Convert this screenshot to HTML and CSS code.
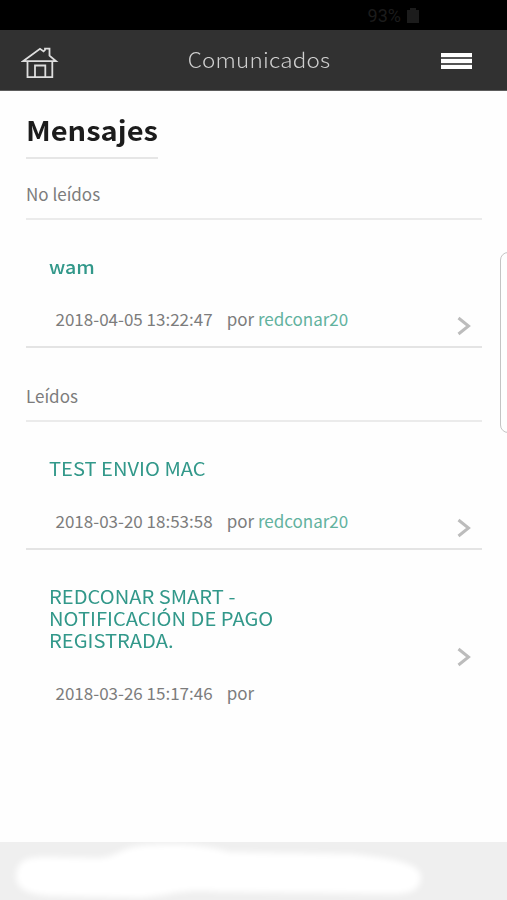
FILE: index.html
```html
<!DOCTYPE html>
<html lang="es">
<head>
<meta charset="utf-8">
<title>Comunicados</title>
<link rel="stylesheet" href="styles.css">
</head>
<body>
<div class="status"><span>93%</span>
  <svg width="12" height="15" viewBox="0 0 12 15"><path d="M3 0h6v2h3v13H0V2h3z" fill="#1c1c1c"/></svg>
</div>
<header class="bar">
  <svg class="home" width="38" height="34" viewBox="0 0 38 34" fill="none" stroke="#dedede" stroke-width="1.8"><path d="M2 15.2L19 2.8l3.6 2.6L24 4V2.6h4.5v7.1L35 15.2zM6.5 15.2v16h24.8v-16M14 31V19.5h10.3V31"/></svg>
  <div class="bar-title">Comunicados</div>
  <div class="menu"><i></i><i></i><i></i></div>
</header>
<main>
  <h1><span>Mensajes</span></h1>
  <h2 class="first">No leídos</h2>
  <article class="message">
    <h3 class="strong">wam</h3>
    <p><time>2018-04-05 13:22:47</time><span>por <a>redconar20</a></span></p>
    <svg class="chevron" width="14" height="20" viewBox="0 0 14 20"><path d="M1.5 2L11.5 10 1.5 18"/></svg>
  </article>
  <h2>Leídos</h2>
  <article class="message">
    <h3>TEST ENVIO MAC</h3>
    <p><time>2018-03-20 18:53:58</time><span>por <a>redconar20</a></span></p>
    <svg class="chevron" width="14" height="20" viewBox="0 0 14 20"><path d="M1.5 2L11.5 10 1.5 18"/></svg>
  </article>
  <article class="message last">
    <h3>REDCONAR SMART -<br>NOTIFICACIÓN DE PAGO<br>REGISTRADA.</h3>
    <p><time>2018-03-26 15:17:46</time><span>por</span></p>
    <svg class="chevron" width="14" height="20" viewBox="0 0 14 20"><path d="M1.5 2L11.5 10 1.5 18"/></svg>
  </article>
</main>
<footer>
  <svg width="507" height="58" viewBox="0 0 507 58"><path class="haze" d="M16 33C18 18 26 15 45 15L100 16C120 14 120 4 150 3C180 1 205 3 230 10L350 12C385 15 421 20 421 35C420 50 410 53 380 52L220 50C180 46 170 54 140 56L50 54C25 52 16 46 16 33z"/></svg>
</footer>
<div class="edge"></div>
</body>
</html>
```
FILE: styles.css
```css
* { box-sizing: border-box; }
body {
  margin: 0;
  width: 507px;
  height: 900px;
  overflow: hidden;
  position: relative;
  display: flex;
  flex-direction: column;
  background: #fefefe;
  color: #7c7c7c;
  font: 17px/22px "Noto Sans CJK SC", "Noto Sans", sans-serif;
}
h1, h2, h3, p { margin: 0; font-weight: 400; }
svg { display: block; }
.status {
  height: 30px;
  padding: 1px 88px 0 0;
  display: flex;
  justify-content: flex-end;
  align-items: center;
  gap: 6px;
  background: #000;
  color: #1c1c1c;
  font: 18px/28px Roboto, sans-serif;
}
.bar {
  height: 61px;
  padding: 0 35px 0 21px;
  display: grid;
  grid-template-columns: 80px 1fr 80px;
  align-items: center;
  background: #313131;
  border-bottom: 1px solid #5c5c5c;
}
.home { margin-top: 6px; }
.bar-title {
  padding: 0 0 2px 11px;
  justify-self: center;
  margin-left: 14px;
  color: #cfcfcf;
  font-size: 21px;
  font-weight: 300;
  line-height: 30px;
  letter-spacing: .2px;
  transform: scaleX(1.07);
}
.menu {
  justify-self: end;
  width: 31px;
  margin-top: 1px;
  display: grid;
  gap: 2px;
  background: #555;
}
.menu i { height: 4px; background: #fff; }
main { flex: 1; padding: 0 25px 0 26px; }
h1 {
  width: 132px;
  height: 68px;
  padding-top: 23px;
  border-bottom: 2px solid #e6e6e6;
  color: #1c1c1c;
  font-size: 27px;
  font-weight: 700;
  line-height: 32px;
  white-space: nowrap;
}
h1 span { display: inline-block; transform: scaleX(1.075); transform-origin: 0 50%; }
h2 {
  height: 74px;
  padding-top: 37px;
  border-bottom: 2px solid #ebebeb;
  font-size: 17px;
}
h2.first { height: 61px; padding-top: 24px; }
.message {
  height: 128px;
  display: grid;
  grid-template-columns: 1fr auto;
  align-content: start;
  padding: 35px 11px 0 23px;
  border-bottom: 2px solid #e4e4e4;
}
h3 {
  grid-column: 1;
  color: #32988a;
  font-size: 19px;
  line-height: 22px;
  transform: scaleX(1.06);
  transform-origin: 0 50%;
}
h3.strong { font-size: 18px; font-weight: 500; transform: scaleX(1.09); }
.message p { grid-column: 1; display: flex; gap: 14px; padding: 31px 0 0 6.5px; white-space: nowrap; }
a { color: #62b29e; }
.chevron {
  grid-column: 2;
  grid-row: 1 / 3;
  align-self: end;
  margin-bottom: -6px;
  fill: none;
  stroke: #bcbcbc;
  stroke-width: 3;
}
.last { border: 0; height: 170px; }
.last .chevron { margin-bottom: 37px; }
footer { height: 58px; background: #efefef; }
.haze { fill: #fff; filter: blur(3px); }
.edge {
  position: absolute;
  left: 500px;
  top: 252px;
  width: 16px;
  height: 181px;
  border: 1px solid #c4c4c4;
  border-radius: 8px;
}
```
